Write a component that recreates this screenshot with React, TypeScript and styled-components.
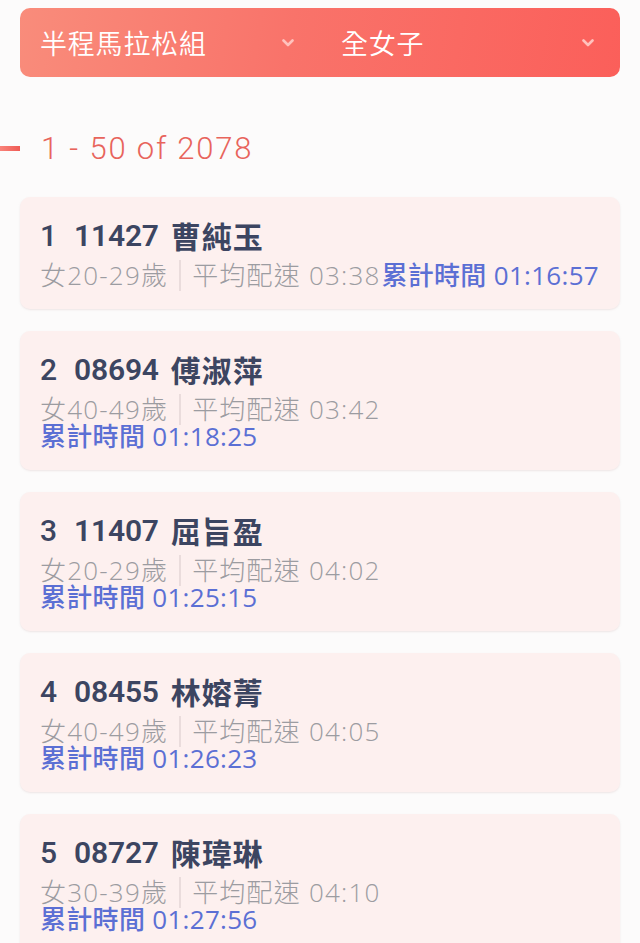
import React from "react";
import styled, { createGlobalStyle } from "styled-components";

const GlobalStyle = createGlobalStyle`
  html, body {
    margin: 0;
    padding: 0;
    background: #fcfbfb;
  }
  body {
    font-family: "Roboto", "Noto Sans CJK TC", sans-serif;
    -webkit-font-smoothing: antialiased;
  }
`;

const Page = styled.div`
  width: 640px;
  padding: 8px 20px 0;
  box-sizing: border-box;
  display: flex;
  flex-direction: column;
`;

const FilterBar = styled.div`
  height: 69px;
  border-radius: 10px;
  background: linear-gradient(100deg, #f98c7b 0%, #f9736a 45%, #fb5f5a 100%);
  display: grid;
  grid-template-columns: 1fr 1fr;
`;

const Select = styled.div<{ $pl: number }>`
  display: flex;
  align-items: center;
  justify-content: space-between;
  padding: 0 26px 0 ${(p) => p.$pl}px;
  color: #ffffff;
  font-family: "Noto Sans CJK TC", sans-serif;
  font-weight: 350;
  font-size: 27px;
  letter-spacing: 0.8px;
`;

const Chevron = () => (
  <svg width="12" height="8" viewBox="0 0 12 8" fill="none">
    <path d="M1.5 1.5 L6 6 L10.5 1.5" stroke="#ffc2bd" strokeWidth="2.6" strokeLinecap="round" strokeLinejoin="round" />
  </svg>
);

const CountRow = styled.div`
  display: flex;
  align-items: center;
  height: 44px;
  margin: 49px 0 27px -20px;
  gap: 21px;
`;

const Dash = styled.div`
  width: 20px;
  height: 5px;
  background: linear-gradient(90deg, #f9837a, #ef5b55);
`;

const CountText = styled.div`
  color: #e8645c;
  font-family: "Roboto", sans-serif;
  font-weight: 300;
  font-size: 31px;
  letter-spacing: 1.8px;
`;

const List = styled.div`
  display: flex;
  flex-direction: column;
  gap: 22px;
`;

const Card = styled.div`
  background: #fdf0ef;
  border-radius: 10px;
  padding: 20px 20px 20px;
  box-shadow: 0 1px 2px rgba(200, 170, 170, 0.25);
`;

const Title = styled.div`
  display: flex;
  align-items: center;
  height: 36px;
  color: #3c4561;
  font-size: 30px;
  font-weight: 600;
  margin-bottom: 9px;
  white-space: pre;
`;

const Rank = styled.span`
  margin-right: 17px;
  font-weight: 500;
`;

const Bib = styled.span`
  margin-right: 12px;
  letter-spacing: -0.2px;
`;

const Name = styled.span`
  font-family: "Noto Sans CJK TC", sans-serif;
  font-weight: 600;
  font-size: 30px;
  letter-spacing: 1px;
`;

const Meta = styled.div<{ $wrap: boolean }>`
  display: flex;
  flex-wrap: ${(p) => (p.$wrap ? "wrap" : "nowrap")};
  align-items: center;
  font-size: 26px;
`;

const Gray = styled.span`
  display: flex;
  align-items: center;
  height: 27px;
  line-height: 27px;
  color: #9c9ca1;
  font-family: "Open Sans", "Noto Sans CJK TC", sans-serif;
  font-weight: 300;
  letter-spacing: 1.2px;
  white-space: pre;
`;

const Divider = styled.span`
  width: 2px;
  height: 31px;
  background: #eadcdc;
  margin: -2px 11px -2px 11px;
`;

const Total = styled.span<{ $wrap: boolean }>`
  display: flex;
  align-items: center;
  height: 27px;
  line-height: 27px;
  color: #5b6fd4;
  font-family: "Open Sans", "Noto Sans CJK TC", sans-serif;
  font-weight: 500;
  letter-spacing: 0.3px;
  white-space: pre;
  flex-basis: ${(p) => (p.$wrap ? "100%" : "auto")};
  margin-left: ${(p) => (p.$wrap ? "0" : "1px")};
`;

type Runner = {
  rank: number;
  bib: string;
  name: string;
  group: string;
  pace: string;
  total: string;
  wrap: boolean;
};

const runners: Runner[] = [
  { rank: 1, bib: "11427", name: "曹純玉", group: "女20-29歲", pace: "03:38", total: "01:16:57", wrap: false },
  { rank: 2, bib: "08694", name: "傅淑萍", group: "女40-49歲", pace: "03:42", total: "01:18:25", wrap: true },
  { rank: 3, bib: "11407", name: "屈旨盈", group: "女20-29歲", pace: "04:02", total: "01:25:15", wrap: true },
  { rank: 4, bib: "08455", name: "林嫆菁", group: "女40-49歲", pace: "04:05", total: "01:26:23", wrap: true },
  { rank: 5, bib: "08727", name: "陳瑋琳", group: "女30-39歲", pace: "04:10", total: "01:27:56", wrap: true },
];

export default function App() {
  return (
    <>
      <GlobalStyle />
      <Page>
        <FilterBar>
          <Select $pl={20}>
            <span>半程馬拉松組</span>
            <Chevron />
          </Select>
          <Select $pl={21}>
            <span>全女子</span>
            <Chevron />
          </Select>
        </FilterBar>
        <CountRow>
          <Dash />
          <CountText>1 - 50 of 2078</CountText>
        </CountRow>
        <List>
          {runners.map((r) => (
            <Card key={r.rank}>
              <Title>
                <Rank>{r.rank}</Rank>
                <Bib>{r.bib}</Bib>
                <Name>{r.name}</Name>
              </Title>
              <Meta $wrap={r.wrap}>
                <Gray>{r.group}</Gray>
                <Divider />
                <Gray>平均配速 {r.pace}</Gray>
                <Total $wrap={r.wrap}>累計時間 {r.total}</Total>
              </Meta>
            </Card>
          ))}
        </List>
      </Page>
    </>
  );
}
